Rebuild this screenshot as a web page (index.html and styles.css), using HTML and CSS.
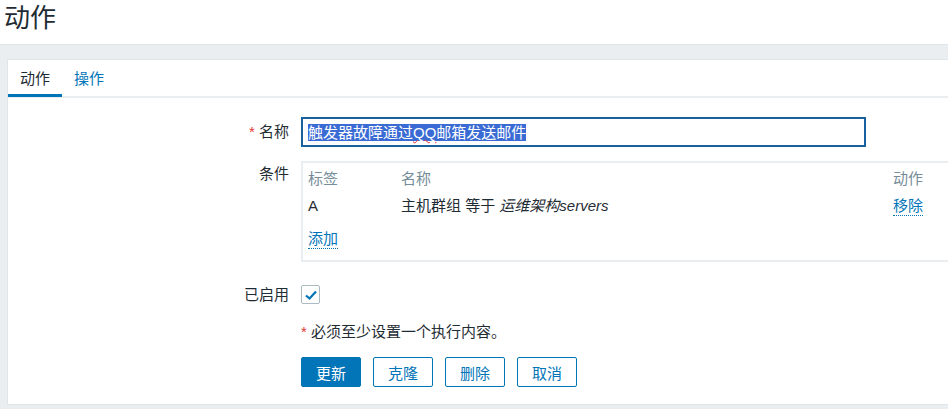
FILE: index.html
```html
<!DOCTYPE html>
<html lang="zh">
<head>
    <meta charset="UTF-8">
    <title>动作</title>
    <link rel="stylesheet" href="styles.css">
</head>
<body>
    <header class="page-header">
        <h1>动作</h1>
    </header>

    <main class="wrapper">
        <div class="panel">
            <!-- Tabs -->
            <ul class="tabs">
                <li class="tab active">动作</li>
                <li class="tab">操作</li>
            </ul>

            <div class="form">
                <div class="form-row row-name">
                    <label class="form-label"><span class="req">*</span> 名称</label>
                    <div class="form-field">
                        <div class="textbox"><span class="selected">触发器故障通过<span class="typo">QQ</span>邮箱发送邮件</span></div>
                    </div>
                </div>

                <div class="form-row row-cond">
                    <label class="form-label">条件</label>
                    <div class="form-field">
                        <div class="cond-box">
                            <table class="cond-table">
                                <thead>
                                    <tr>
                                        <th class="col-tag">标签</th>
                                        <th class="col-name">名称</th>
                                        <th class="col-act">动作</th>
                                    </tr>
                                </thead>
                                <tbody>
                                    <tr>
                                        <td>A</td>
                                        <td>主机群组 等于 <em>运维架构servers</em></td>
                                        <td><a class="link">移除</a></td>
                                    </tr>
                                    <tr class="add-row">
                                        <td colspan="3"><a class="link">添加</a></td>
                                    </tr>
                                </tbody>
                            </table>
                        </div>
                    </div>
                </div>

                <div class="form-row row-enabled">
                    <label class="form-label">已启用</label>
                    <div class="form-field">
                        <span class="checkbox">
                            <svg width="14" height="12" viewBox="0 0 14 12">
                                <path d="M2 6.5 L5.5 9.5 L12 2.5" fill="none" stroke="#0275b8" stroke-width="2.2"/>
                            </svg>
                        </span>
                    </div>
                </div>

                <div class="form-row row-note">
                    <div class="form-label"></div>
                    <div class="form-field note"><span class="req">*</span> 必须至少设置一个执行内容。</div>
                </div>

                <div class="form-row row-buttons">
                    <div class="form-label"></div>
                    <div class="form-field buttons">
                        <button class="btn primary">更新</button>
                        <button class="btn">克隆</button>
                        <button class="btn">删除</button>
                        <button class="btn">取消</button>
                    </div>
                </div>
            </div>
        </div>
    </main>
</body>
</html>
```

FILE: styles.css
```css
body {
    margin: 0;
    background: #ebeef0;
    color: #1f2c33;
    font-family: "Liberation Sans", "Noto Sans CJK SC", sans-serif;
    font-size: 15px;
    overflow: hidden;
}

.page-header {
    background: #fff;
    height: 44px;
    border-bottom: 1px solid #dfe4e7;
    padding-left: 4px;
}

.page-header h1 {
    margin: 0;
    font-size: 26px;
    font-weight: normal;
    line-height: 36px;
}

.wrapper {
    padding: 14px 0 0 7px;
}

.panel {
    background: #fff;
    border: 1px solid #dfe4e7;
    border-right: none;
    height: 344px;
}

.tabs {
    list-style: none;
    margin: 0;
    padding: 0;
    display: flex;
    height: 36px;
    border-bottom: 2px solid #ebeef0;
}

.tab {
    padding: 3px 12px 0 12px;
    line-height: 31px;
    color: #0275b8;
    border-bottom: 3px solid transparent;
    height: 31px;
    box-sizing: content-box;
}

.tab.active {
    color: #1f2c33;
    border-bottom-color: #0275b8;
    width: 30px;
    margin-bottom: -2px;
}

.form {
    padding-top: 19px;
}

.form-row {
    display: flex;
    align-items: flex-start;
}

.form-label {
    width: 293px;
    flex: none;
    text-align: right;
    padding-right: 12px;
    box-sizing: border-box;
    line-height: 30px;
    white-space: nowrap;
}

.req {
    color: #e33734;
}

.form-field {
    flex: 1;
    min-width: 0;
}

.textbox {
    width: 565px;
    height: 30px;
    box-sizing: border-box;
    border: 2px solid #19619e;
    padding: 3px 5px 0 5px;
    font-size: 15px;
    line-height: 21px;
}

.selected {
    background: #3a6bd4;
    color: #fff;
}

.typo {
    text-decoration: underline wavy #e33734;
    text-decoration-thickness: 1px;
}

.row-cond {
    margin-top: 14px;
}

.row-cond .form-label {
    line-height: 26px;
}

.cond-box {
    border: 2px solid #ebeef0;
    border-right: none;
    height: 101px;
    box-sizing: border-box;
    padding: 2px 0 0 5px;
}

.cond-table {
    border-collapse: collapse;
    width: 635px;
}

.cond-table th,
.cond-table td {
    text-align: left;
    padding: 0;
    font-weight: normal;
    line-height: 27px;
    white-space: nowrap;
}

.cond-table th {
    color: #768d99;
}

.col-tag {
    width: 93px;
}

.col-act {
    width: 50px;
}

.cond-table em {
    font-style: italic;
}

.add-row td {
    padding-top: 6px;
}

.link {
    color: #0275b8;
    border-bottom: 1px dotted #0275b8;
    line-height: 18px;
    display: inline-block;
}

.row-enabled {
    margin-top: 23px;
}

.row-enabled .form-label {
    line-height: 20px;
}

.checkbox {
    display: flex;
    align-items: center;
    justify-content: center;
    width: 19px;
    height: 19px;
    box-sizing: border-box;
    border: 1px solid #acbbc2;
    border-radius: 2px;
}

.row-note {
    margin-top: 17px;
}

.note {
    line-height: 20px;
}

.row-buttons {
    margin-top: 15px;
}

.buttons {
    display: flex;
    gap: 12px;
}

.btn {
    width: 60px;
    height: 30px;
    border: 1px solid #0275b8;
    border-radius: 2px;
    background: #fff;
    color: #0275b8;
    font-family: inherit;
    font-size: 15px;
    padding: 0;
    cursor: pointer;
}

.btn.primary {
    background: #0275b8;
    color: #fff;
}
```
